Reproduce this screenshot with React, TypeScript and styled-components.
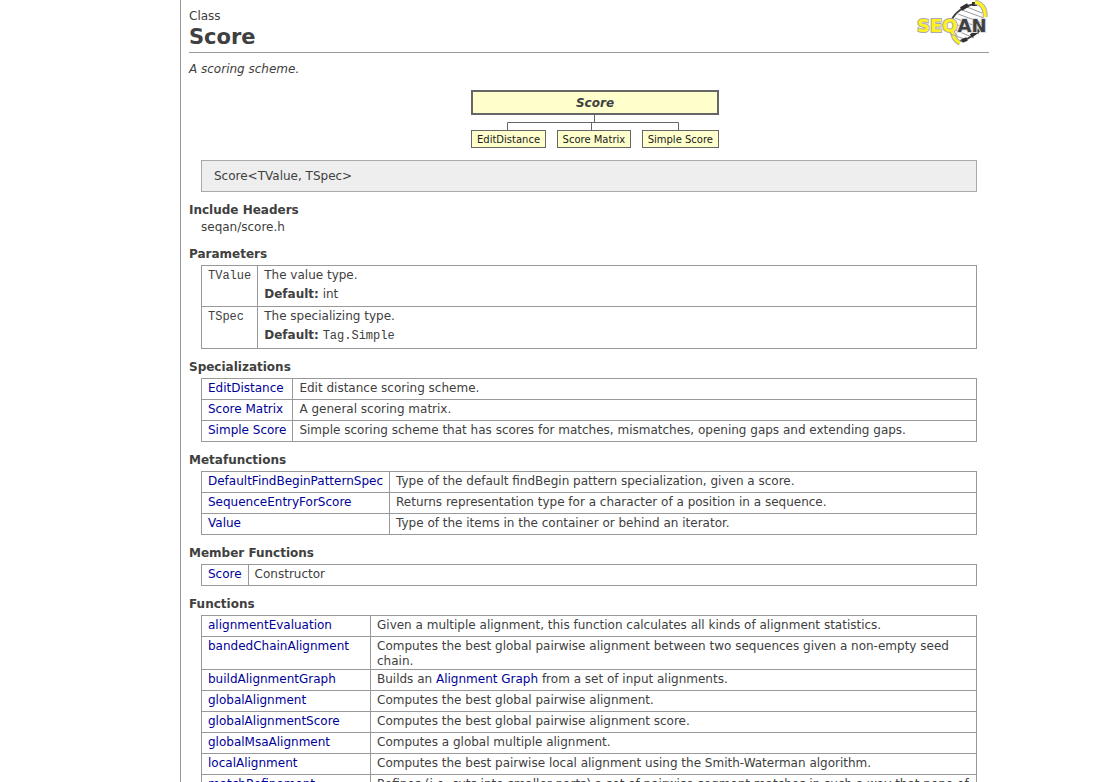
import React from "react";
import styled, { createGlobalStyle } from "styled-components";

const GlobalStyle = createGlobalStyle`
  body {
    margin: 0;
    background: #fff;
    color: #404040;
    font: 12px/15px Verdana, "DejaVu Sans", sans-serif;
  }
`;

const Page = styled.div`
  display: grid;
  grid-template-columns: 180px minmax(0, 1fr);
  height: 100vh;
  overflow: hidden;
`;

const Main = styled.main`
  border-left: 1px solid #999;
  padding: 0 8px;
  overflow: hidden;
`;

const Content = styled.div`
  max-width: 800px;
`;

const Header = styled.header`
  display: flex;
  justify-content: space-between;
  align-items: flex-start;
  height: 52px;
  border-bottom: 1px solid #999;
`;

const Kind = styled.div`
  padding-top: 9px;
`;

const Title = styled.h1`
  margin: 0;
  font-size: 21px;
  line-height: 26px;
`;

const Summary = styled.p`
  margin: 9px 0 13px;
  font-style: italic;
`;

const Tree = styled.div`
  width: 248px;
  margin: 0 auto;
  padding-left: 12px;
`;

const TreeRoot = styled.div`
  box-sizing: border-box;
  height: 25px;
  border: 2px solid #666;
  background: #ffffcc;
  text-align: center;
  font-weight: bold;
  font-style: italic;
  line-height: 22px;
`;

const TreeLines = styled.svg`
  display: block;
`;

const TreeLeaves = styled.div`
  display: flex;
  justify-content: space-between;
`;

const TreeLeaf = styled.a`
  border: 1px solid #666;
  background: #ffffcc;
  padding: 1px 5px 0;
  font-size: 10px;
  line-height: 15px;
  white-space: nowrap;
  color: #202020;
  text-decoration: none;
`;

const Signature = styled.div`
  margin: 12px 12px 0;
  border: 1px solid #aaa;
  background: #eee;
  padding: 8px 12px 7px;
`;

const Heading = styled.h2`
  margin: 10px 0 0;
  font-size: 12px;
  line-height: 16px;
`;

const HeaderFile = styled.div`
  margin: 1px 12px 11px;
  line-height: 16px;
`;

const Table = styled.table`
  width: calc(100% - 24px);
  margin: 3px 12px 0;
  border-collapse: collapse;
`;

const Cell = styled.td<{ $width?: number }>`
  border: 1px solid #999;
  padding: 2px 6px 0;
  height: 18px;
  vertical-align: top;
  width: ${(p) => (p.$width ? `${p.$width}px` : "auto")};
  white-space: ${(p) => (p.$width ? "nowrap" : "normal")};
`;

const Link = styled.a`
  color: #000099;
  text-decoration: none;
`;

const Code = styled.code`
  font: 12px/15px "Courier New", "Liberation Mono", monospace;
`;

const Line = styled.div`
  padding-bottom: 4px;
`;

function Logo() {
  return (
    <svg width="72" height="46" viewBox="0 0 72 46" role="img" aria-label="SeqAn">
      <path d="M35 22C38 12 48 4 59 3C66 5 69 11 68 19C66 30 56 39 44 42C37 38 34 30 35 22Z" fill="#fff" />
      <path
        d="M50 7L65 13M45 10L67 18M41 14L68 24M38 18L66 29M36 23L62 34M36 29L57 38M39 36L50 40"
        fill="none"
        stroke="#999"
      />
      <path d="M34 21C38 12 48 5 59 4M43 41C53 39 63 32 68 20" fill="none" stroke="#404040" strokeWidth="2" />
      <path d="M44 9L51 5M55 4L60 4M45 41L50 39M54 36L62 30" fill="none" stroke="#303030" strokeWidth="4" />
      <path d="M58 2C64 3 69 8 68 17M35 29C35 35 38 41 43 43" fill="none" stroke="#aaa" strokeWidth="5" />
      <path d="M58 2C64 3 69 8 68 17M35 29C35 35 38 41 43 43" fill="none" stroke="#fff020" strokeWidth="3" />
      <text
        x="0"
        y="32"
        fontFamily="'DejaVu Sans', sans-serif"
        fontSize="18"
        fontWeight="bold"
        strokeWidth="2"
        paintOrder="stroke"
      >
        <tspan fill="#fff020" stroke="#aaa">SEQ</tspan>
        <tspan fill="#404040" stroke="#ddd">AN</tspan>
      </text>
    </svg>
  );
}

type Row = [string, React.ReactNode];

const specializations: Row[] = [
  ["EditDistance", "Edit distance scoring scheme."],
  ["Score Matrix", "A general scoring matrix."],
  ["Simple Score", "Simple scoring scheme that has scores for matches, mismatches, opening gaps and extending gaps."],
];

const metafunctions: Row[] = [
  ["DefaultFindBeginPatternSpec", "Type of the default findBegin pattern specialization, given a score."],
  ["SequenceEntryForScore", "Returns representation type for a character of a position in a sequence."],
  ["Value", "Type of the items in the container or behind an iterator."],
];

const functions: Row[] = [
  ["alignmentEvaluation", "Given a multiple alignment, this function calculates all kinds of alignment statistics."],
  ["bandedChainAlignment", "Computes the best global pairwise alignment between two sequences given a non-empty seed chain."],
  ["buildAlignmentGraph", <>Builds an <Link href="#AlignmentGraph">Alignment Graph</Link> from a set of input alignments.</>],
  ["globalAlignment", "Computes the best global pairwise alignment."],
  ["globalAlignmentScore", "Computes the best global pairwise alignment score."],
  ["globalMsaAlignment", "Computes a global multiple alignment."],
  ["localAlignment", "Computes the best pairwise local alignment using the Smith-Waterman algorithm."],
  ["matchRefinement", "Refines (i.e. cuts into smaller parts) a set of pairwise segment matches in such a way that none of the segments partly overlap."],
];

function Section({ title, rows, nameWidth = 1 }: { title: string; rows: Row[]; nameWidth?: number }) {
  return (
    <section>
      <Heading>{title}</Heading>
      <Table>
        <tbody>
          {rows.map(([name, text]) => (
            <tr key={name}>
              <Cell $width={nameWidth}><Link href={`#${name}`}>{name}</Link></Cell>
              <Cell>{text}</Cell>
            </tr>
          ))}
        </tbody>
      </Table>
    </section>
  );
}

export default function App() {
  return (
    <Page>
      <GlobalStyle />
      <div />
      <Main>
        <Content>
          <Header>
            <div>
              <Kind>Class</Kind>
              <Title>Score</Title>
            </div>
            <Logo />
          </Header>
          <Summary>A scoring scheme.</Summary>
          <Tree>
            <TreeRoot>Score</TreeRoot>
            <TreeLines width="248" height="15" viewBox="0 0 248 15" aria-hidden="true">
              <path d="M123.5 0V7.5M36.5 15V7.5H207.5V15M120.5 7.5V15" fill="none" stroke="#666" />
            </TreeLines>
            <TreeLeaves>
              <TreeLeaf href="#EditDistance">EditDistance</TreeLeaf>
              <TreeLeaf href="#ScoreMatrix">Score Matrix</TreeLeaf>
              <TreeLeaf href="#SimpleScore">Simple Score</TreeLeaf>
            </TreeLeaves>
          </Tree>
          <Signature>Score&lt;TValue, TSpec&gt;</Signature>
          <Heading>Include Headers</Heading>
          <HeaderFile>seqan/score.h</HeaderFile>
          <Heading>Parameters</Heading>
          <Table>
            <tbody>
              <tr>
                <Cell $width={1}><Code>TValue</Code></Cell>
                <Cell>
                  <Line>The value type.</Line>
                  <Line><b>Default:</b> int</Line>
                </Cell>
              </tr>
              <tr>
                <Cell $width={1}><Code>TSpec</Code></Cell>
                <Cell>
                  <Line>The specializing type.</Line>
                  <Line><b>Default:</b> <Code>Tag.Simple</Code></Line>
                </Cell>
              </tr>
            </tbody>
          </Table>
          <Section title="Specializations" rows={specializations} />
          <Section title="Metafunctions" rows={metafunctions} />
          <Section title="Member Functions" rows={[["Score", "Constructor"]]} />
          <Section title="Functions" rows={functions} nameWidth={156} />
        </Content>
      </Main>
    </Page>
  );
}
